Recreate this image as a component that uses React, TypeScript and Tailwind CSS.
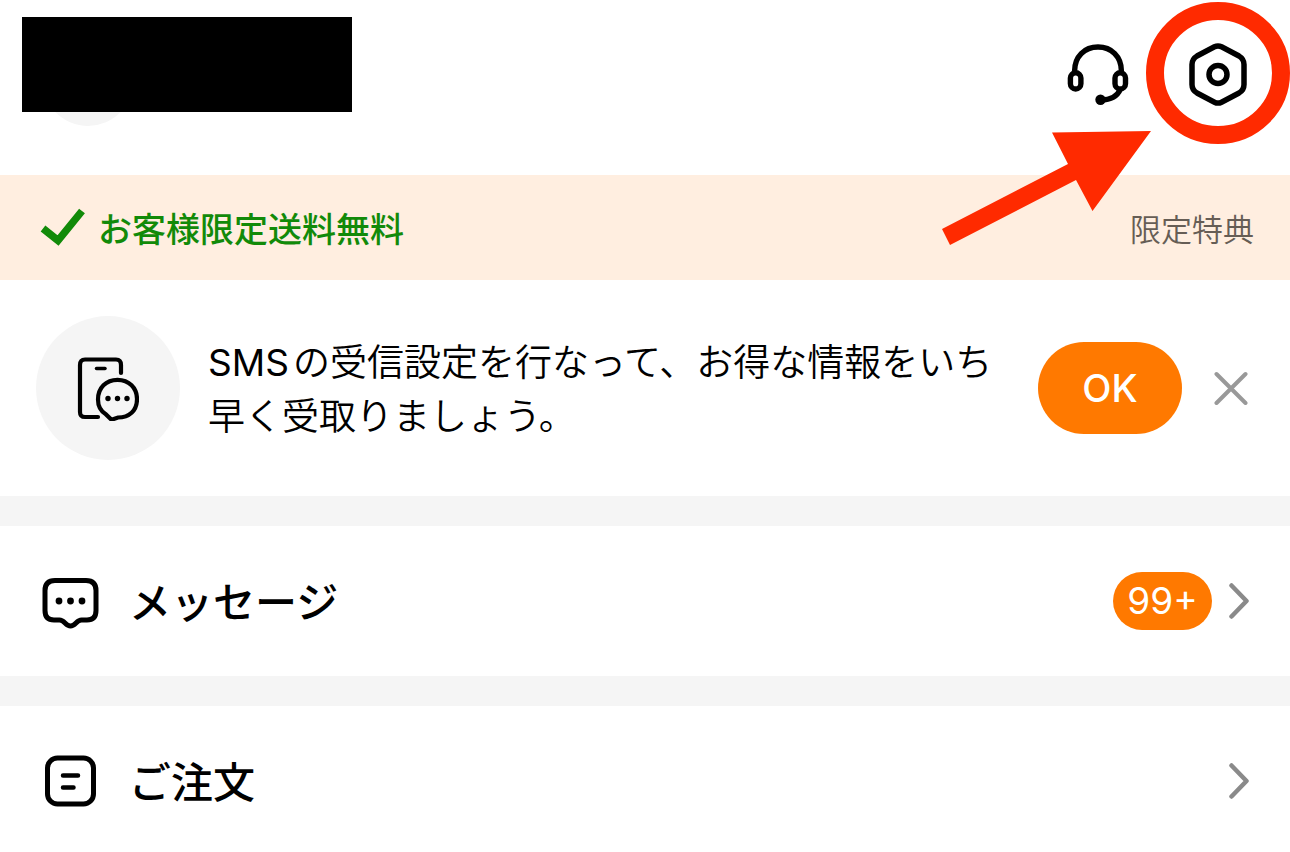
import React, { useState } from "react";

const HeadsetIcon = () => (
  <svg width="62" height="62" viewBox="0 0 62 62" fill="none" stroke="currentColor" strokeWidth="5.4" aria-hidden="true">
    <path d="M7.6 30V28C7.6 13.500 17.500 4 31 4S54.400 13.500 54.400 28V30" />
    <rect x="3.4" y="29.800" width="10.500" height="16.200" rx="5.250" />
    <rect x="48" y="29.800" width="10.500" height="16.200" rx="5.250" />
    <path d="M53.500 46C50.500 53 44 57 34 57" />
    <circle cx="33.500" cy="56.800" r="5.200" fill="currentColor" stroke="none" />
  </svg>
);

const SettingsIcon = () => (
  <svg width="58" height="64" viewBox="0 0 58 64" fill="none" stroke="currentColor" strokeWidth="5.500" aria-hidden="true">
    <path d="M25.500 4.800 Q29 3 32.500 4.800 L50 14 Q55 17 55 22.500 V42.500 Q55 48 50 51 L32.500 60.200 Q29 62 25.500 60.200 L8 51 Q3 48 3 42.500 V22.500 Q3 17 8 14 Z" />
    <circle cx="29" cy="32.500" r="9" />
  </svg>
);

const PhoneMessageIcon = () => (
  <svg width="62" height="66" viewBox="0 0 62 66" fill="none" stroke="currentColor" strokeWidth="4.200" strokeLinecap="round" aria-hidden="true">
    <path d="M21 62H8Q3 62 3 57V10Q3 4.500 8 4.500H39Q44 4.500 44 10V18" />
    <path d="M19.500 13.500H28" strokeWidth="3.500" />
    <path d="M34.500 64.800 L28.500 59 C23 55.500 21 50.500 21 44.500 C21 33 29 24.800 40.500 24.800 C52 24.800 60 33 60 44 C60 56 52 62.500 41 62.500 Z" />
    <g fill="currentColor" stroke="none">
      <circle cx="31" cy="43.500" r="2.700" />
      <circle cx="40.500" cy="43.500" r="2.700" />
      <circle cx="50" cy="43.500" r="2.700" />
    </g>
  </svg>
);

const MessageIcon = () => (
  <svg width="57" height="56" viewBox="0 0 57 56" fill="none" stroke="currentColor" strokeWidth="5" strokeLinejoin="round" aria-hidden="true">
    <path d="M13 7.500H44Q54 7.500 54 17.500V37.500Q54 47 45 47H39.500C34.500 47 33.500 53 28.500 53S22.500 47 17.500 47H12Q3 47 3 37.500V17.500Q3 7.500 13 7.500Z" />
    <g fill="currentColor" stroke="none">
      <circle cx="17" cy="28" r="3.400" />
      <circle cx="28.500" cy="28" r="3.400" />
      <circle cx="40" cy="28" r="3.400" />
    </g>
  </svg>
);

const OrderIcon = () => (
  <svg width="52" height="52" viewBox="0 0 52 52" fill="none" stroke="currentColor" strokeWidth="5" strokeLinecap="round" aria-hidden="true">
    <rect x="3.500" y="3" width="46" height="46" rx="10" />
    <path d="M19 20.500H34M19 32.500H29.500" strokeWidth="4.500" />
  </svg>
);

const ChevronIcon = () => (
  <svg width="20" height="36" viewBox="0 0 20 36" fill="none" stroke="#8a8a8a" strokeWidth="4.500" strokeLinecap="round" strokeLinejoin="round" aria-hidden="true">
    <path d="M2.500 2.500L17.500 18L2.500 33.500" />
  </svg>
);

interface MenuRowProps {
  icon: React.ReactNode;
  label: string;
  badge?: string;
}

function MenuRow({ icon, label, badge }: MenuRowProps) {
  return (
    <a href="#" className="flex items-center h-[150px] shrink-0 px-[41px] bg-white border-t-[30px] border-[#f5f5f5] box-content">
      <span className="w-[58px] flex justify-center">{icon}</span>
      <span className="ml-[30px] pt-1 text-[42px] leading-[60px] font-medium">{label}</span>
      <span className="ml-auto flex items-center gap-[17px]">
        {badge && (
          <span className="flex items-center justify-center w-[99px] h-[58px] rounded-full bg-[#ff7900] text-white text-[37px]">
            {badge}
          </span>
        )}
        <ChevronIcon />
      </span>
    </a>
  );
}

export default function App() {
  const [showSms, setShowSms] = useState(true);

  return (
    <div className="h-screen overflow-hidden flex flex-col bg-white text-black font-['Inter','Noto_Sans_CJK_JP',sans-serif]">
      <header className="relative h-[175px] shrink-0 flex items-start justify-between pl-[22px] pr-[43px]">
        {/* Profile, name hidden */}
        <div className="relative mt-[17px] w-[330px] h-[95px]">
          <div className="absolute left-[21px] top-[19px] w-[90px] h-[90px] rounded-full bg-[#f5f5f5]" />
          <div className="absolute inset-0 bg-black" />
        </div>
        <div className="mt-[42px] flex items-center gap-[60px]">
          <button type="button" aria-label="サポート">
            <HeadsetIcon />
          </button>
          <button type="button" aria-label="設定">
            <SettingsIcon />
          </button>
        </div>
        {/* Pointer to the settings button */}
        <svg className="absolute right-0 top-0 z-10 pointer-events-none" width="350" height="250" viewBox="0 0 350 250" aria-hidden="true">
          <ellipse cx="278" cy="73" rx="63" ry="62" fill="none" stroke="#ff2a00" strokeWidth="18" />
          <path d="M211 131L112 132.500L128 164L2 229L10 245L136 180L152.500 211Z" fill="#ff2a00" />
        </svg>
      </header>

      <section className="flex items-center h-[105px] shrink-0 pl-10 pr-9 bg-[#ffeee0]">
        <svg width="46" height="40" viewBox="0 0 46 40" fill="none" stroke="#128a09" strokeWidth="7.500" aria-hidden="true">
          <path d="M3 20.500L18 32.500L42 3" />
        </svg>
        <p className="ml-3 pt-1 text-[34px] leading-[48px] font-medium text-[#128a09]">お客様限定送料無料</p>
        <a href="#" className="ml-auto pt-1 text-[31px] leading-[48px] text-[#665d55] font-[350]">限定特典</a>
      </section>

      {showSms && (
        <section className="flex items-center h-[216px] shrink-0 pl-9 pr-[42px]">
          <div className="w-36 h-36 shrink-0 rounded-full bg-[#f5f5f5] flex items-center justify-center">
            <PhoneMessageIcon />
          </div>
          <p className="ml-7 pt-1 text-[37px] leading-[54px] font-[350] whitespace-nowrap">
            <span className="mr-1 font-normal">SMS</span>の受信設定を行なって、お得な情報をいち
            <br />
            早く受取りましょう。
          </p>
          <button type="button" className="ml-auto w-36 h-[92px] rounded-full bg-[#ff7900] text-white text-[38px] font-medium">
            OK
          </button>
          <button type="button" aria-label="閉じる" className="ml-8" onClick={() => setShowSms(false)}>
            <svg width="34" height="34" viewBox="0 0 34 34" fill="none" stroke="#999" strokeWidth="4" strokeLinecap="round" aria-hidden="true">
              <path d="M2.500 3L31.500 32M31.500 3L2.500 32" />
            </svg>
          </button>
        </section>
      )}

      <MenuRow icon={<MessageIcon />} label="メッセージ" badge="99+" />
      <MenuRow icon={<OrderIcon />} label="ご注文" />
    </div>
  );
}
